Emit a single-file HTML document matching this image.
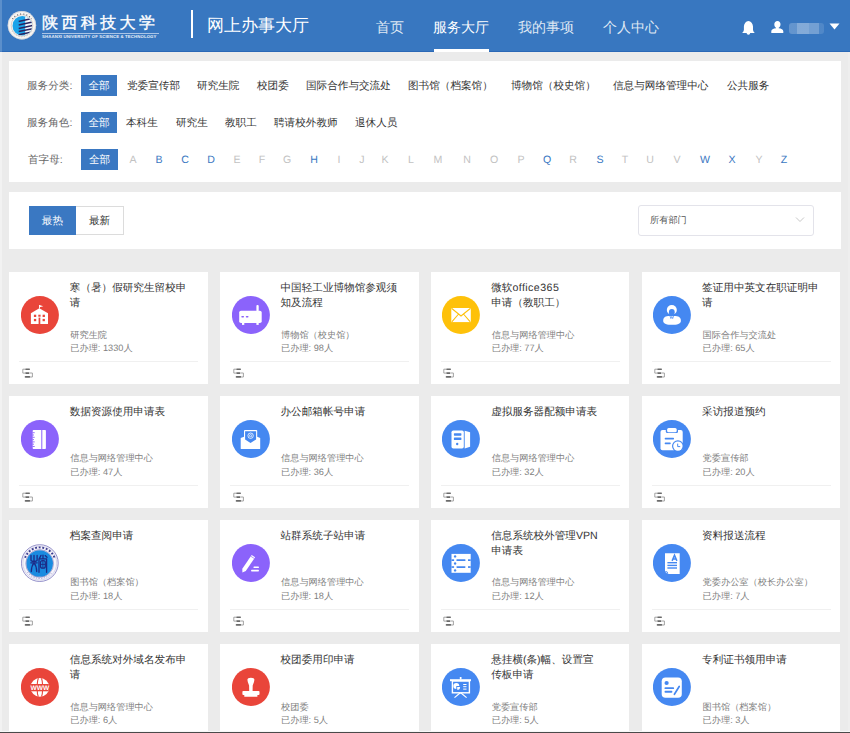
<!DOCTYPE html>
<html><head><meta charset="utf-8"><title>网上办事大厅</title>
<style>
*{margin:0;padding:0;box-sizing:border-box}
html,body{width:850px;height:733px;overflow:hidden;background:#ebebeb;font-family:"Liberation Sans",sans-serif;position:relative;text-rendering:geometricPrecision}
.abs{position:absolute}
#hd{position:absolute;left:0;top:0;width:850px;height:52px;background:#3877c0;border-bottom:1px solid #2a68b6}
.nav{position:absolute;top:17px;font-size:14px;line-height:20px;color:#dfe8f4;white-space:nowrap}
.nav.on{color:#fff}
.panel{position:absolute;background:#fff}
.lbl{position:absolute;font-size:10.6px;line-height:13px;color:#666;white-space:nowrap}
.btn{position:absolute;background:#3a78c2;color:#fff;font-size:10.6px;line-height:22px;text-align:center;width:36px;height:21px}
.fi{position:absolute;font-size:10.6px;line-height:13px;color:#333;white-space:nowrap}
.lt{position:absolute;width:20px;text-align:center;font-size:10.6px;line-height:14px;color:#c2c2c2}
.lt.on{color:#3a78c2}
.card{position:absolute;width:198.8px;height:112px;background:#fff}
.card .ic{position:absolute;left:11.5px;top:24.1px;width:38px;height:38px}
.card .ic svg{display:block}
.card .tt{position:absolute;left:60.5px;top:9.2px;width:132px;font-size:10.6px;line-height:14.6px;color:#333}
.card .dp{position:absolute;left:61px;top:56.6px;font-size:9.2px;line-height:13.6px;color:#808080;white-space:nowrap}
.card .ln{position:absolute;left:10px;top:89px;width:179px;height:1px;background:#f0f0f0}
.card .ft{position:absolute;left:12.5px;top:96px}
</style></head><body>
<div style="position:absolute;left:0;top:52px;width:2px;height:681px;background:#f2f2f2"></div>
<div style="position:absolute;left:848px;top:52px;width:2px;height:681px;background:#eeeeee"></div>
<div id="hd">
 <svg class="abs" style="left:7px;top:10px" width="30" height="31" viewBox="0 0 30 31">
  <defs><clipPath id="ec"><circle cx="15.35" cy="15.7" r="9.8"/></clipPath></defs>
  <circle cx="14.9" cy="15.3" r="14.2" fill="#f7f5f2"/>
  <circle cx="14.9" cy="15.3" r="13.9" fill="none" stroke="#b8bcc8" stroke-width=".5"/>
  <circle cx="15" cy="15.5" r="10.8" fill="none" stroke="#c9b8b4" stroke-width=".6"/>
  <path d="M5.5 9 A11.5 11.5 0 0 1 24.5 9" stroke="#4a4a55" stroke-width="1.1" fill="none" stroke-dasharray=".9 2.2"/>
  <path d="M5 21 A11.5 11.5 0 0 0 25 21" stroke="#c0c0c8" stroke-width="1" fill="none" stroke-dasharray="1 1.8"/>
  <circle cx="15.35" cy="15.7" r="9.8" fill="#1ba3e9"/>
  <g clip-path="url(#ec)">
   <rect x="18.2" y="6" width="10" height="20" fill="#f4f8fc"/>
   <path d="M11.7 11.4 L25 8.6 M11.7 14.9 L25.5 12.1 M11.7 18.4 L25.5 15.6 M11.7 21.6 L25.5 18.8 M11.7 24.7 L25 21.9" stroke="#2b2560" stroke-width="1.5" fill="none"/>
  </g>
 </svg>
 <div class="abs" style="left:42px;top:13px;font-family:'Liberation Serif',serif;font-size:16px;line-height:22px;letter-spacing:3.4px;color:#fff;font-weight:normal;font-style:normal;-webkit-text-stroke:.35px #fff;white-space:nowrap">陕西科技大学</div>
 <div class="abs" style="left:42px;top:33px;width:117px;height:1px;background:#a9c4e6"></div>
 <div class="abs" style="left:42px;top:35px;font-size:4.3px;line-height:4px;color:#e6eef8;font-weight:bold;white-space:nowrap;letter-spacing:.12px">SHAANXI UNIVERSITY OF SCIENCE &amp; TECHNOLOGY</div>
 <div class="abs" style="left:191px;top:10px;width:2px;height:28px;background:#fff"></div>
 <div class="abs" style="left:0;top:0;width:1.5px;height:52px;background:rgba(255,255,255,.18)"></div>
 <div class="abs" style="left:207px;top:13.5px;font-size:17px;line-height:24px;color:#fff;white-space:nowrap">网上办事大厅</div>
 <div class="nav" style="left:376px">首页</div>
 <div class="nav on" style="left:433px">服务大厅</div>
 <div class="abs" style="left:434px;top:49px;width:55px;height:3px;background:#fff"></div>
 <div class="nav" style="left:518px">我的事项</div>
 <div class="nav" style="left:603px">个人中心</div>
 <svg class="abs" style="left:742px;top:20px" width="14" height="15" viewBox="0 0 14 15"><path d="M6.4 .9 C8.9 1.2 10.9 3.2 11 6.6 L11 10 Q11.4 11.8 12.8 13 L0.1 13 Q1.5 11.8 1.9 10 L1.9 6.6 C2 3.2 3.9 1.2 6.4 .9Z" fill="#fff"/><circle cx="6.4" cy="13" r="1.8" fill="#fff"/></svg>
 <svg class="abs" style="left:771px;top:21px" width="13" height="13" viewBox="0 0 13 13"><path d="M6.5 0 C8.3 0 9.5 1.3 9.5 3.3 C9.5 5 8.6 6.2 7.7 6.8 L7.7 7.3 C10.2 7.6 12.3 8.5 12.3 10.3 L12.3 12 L.3 12 L.3 10.3 C.3 8.5 2.4 7.6 5 7.3 L5 6.8 C4.1 6.2 3.3 5 3.3 3.3 C3.3 1.3 4.6 0 6.5 0Z" fill="#fff"/></svg>
 <div class="abs" style="left:789px;top:23px;width:35px;height:11px;border-radius:3px;background:linear-gradient(90deg,rgba(255,255,255,.22) 0,rgba(255,255,255,.22) 8px,rgba(255,255,255,.38) 8px,rgba(255,255,255,.38) 20px,rgba(255,255,255,.3) 20px,rgba(255,255,255,.3) 30px,rgba(255,255,255,.12) 30px)"></div>
 <svg class="abs" style="left:829px;top:23px" width="11" height="7" viewBox="0 0 11 7"><path d="M.5 .5 L10.5 .5 L5.5 6.5Z" fill="#fff"/></svg>
</div>

<div class="panel" style="left:8.5px;top:60.6px;width:832.6px;height:121.8px"></div>
<div class="lbl" style="left:27px;top:80px">服务分类:</div>
<div class="btn" style="left:81px;top:74.5px">全部</div>
<div class="lbl" style="left:27px;top:117px">服务角色:</div>
<div class="btn" style="left:81px;top:111.5px">全部</div>
<div class="lbl" style="left:28px;top:154px">首字母:</div>
<div class="btn" style="left:81px;top:148.5px;width:37px">全部</div>
<div class="fi" style="left:127px;top:80px">党委宣传部</div><div class="fi" style="left:197px;top:80px">研究生院</div><div class="fi" style="left:257px;top:80px">校团委</div><div class="fi" style="left:306px;top:80px">国际合作与交流处</div><div class="fi" style="left:408px;top:80px">图书馆（档案馆）</div><div class="fi" style="left:511px;top:80px">博物馆（校史馆）</div><div class="fi" style="left:613px;top:80px">信息与网络管理中心</div><div class="fi" style="left:727px;top:80px">公共服务</div><div class="fi" style="left:126px;top:117px">本科生</div><div class="fi" style="left:176px;top:117px">研究生</div><div class="fi" style="left:225px;top:117px">教职工</div><div class="fi" style="left:274px;top:117px">聘请校外教师</div><div class="fi" style="left:355px;top:117px">退休人员</div><div class="lt" style="left:123px;top:153px">A</div><div class="lt on" style="left:149px;top:153px">B</div><div class="lt on" style="left:175px;top:153px">C</div><div class="lt on" style="left:201px;top:153px">D</div><div class="lt" style="left:227px;top:153px">E</div><div class="lt" style="left:252px;top:153px">F</div><div class="lt" style="left:277px;top:153px">G</div><div class="lt on" style="left:304px;top:153px">H</div><div class="lt" style="left:329px;top:153px">I</div><div class="lt" style="left:352px;top:153px">J</div><div class="lt" style="left:375px;top:153px">K</div><div class="lt" style="left:401px;top:153px">L</div><div class="lt" style="left:428px;top:153px">M</div><div class="lt" style="left:457px;top:153px">N</div><div class="lt" style="left:484px;top:153px">O</div><div class="lt" style="left:511px;top:153px">P</div><div class="lt on" style="left:537px;top:153px">Q</div><div class="lt" style="left:563px;top:153px">R</div><div class="lt on" style="left:590px;top:153px">S</div><div class="lt" style="left:615px;top:153px">T</div><div class="lt" style="left:640px;top:153px">U</div><div class="lt" style="left:667px;top:153px">V</div><div class="lt on" style="left:695px;top:153px">W</div><div class="lt on" style="left:722px;top:153px">X</div><div class="lt" style="left:749px;top:153px">Y</div><div class="lt on" style="left:774px;top:153px">Z</div>

<div class="panel" style="left:8.5px;top:191.6px;width:832.6px;height:57.1px"></div>
<div class="abs" style="left:28.8px;top:206px;width:47.2px;height:28.6px;background:#3a78c2;color:#fff;font-size:10.6px;line-height:30px;text-align:center">最热</div>
<div class="abs" style="left:76px;top:206px;width:48px;height:28.6px;border:1px solid #dcdcdc;border-left:none;color:#333;font-size:10.6px;line-height:28px;text-align:center">最新</div>
<div class="abs" style="left:638px;top:205px;width:176px;height:31px;border:1px solid #e3e3ea;border-radius:3px"></div>
<div class="abs" style="left:650px;top:214px;font-size:9.2px;line-height:13px;color:#555">所有部门</div>
<svg class="abs" style="left:795px;top:216px" width="10" height="7" viewBox="0 0 10 7"><path d="M1 1.5 L5 5.5 L9 1.5" stroke="#c8c8c8" stroke-width="1" fill="none"/></svg>

<div class="card" style="left:9.3px;top:272px">
<div class="ic"><svg width="38" height="38" viewBox="0 0 38 38"><circle cx="18.9" cy="19" r="19" fill="#e9453a"/><g transform="translate(0 0)"><path d="M9.9 17.3 L18.3 12.2 L27 17.3 L27 28 L9.9 28 Z" fill="#fff"/>
<rect x="18" y="9" width="0.9" height="3.5" fill="#fff"/><path d="M18.5 9 L22.3 10.2 L18.5 11.3Z" fill="#fff"/>
<rect x="12.9" y="18.7" width="2.3" height="2.3" fill="#e9453a"/><rect x="21.6" y="18.7" width="2.3" height="2.3" fill="#e9453a"/>
<rect x="12.9" y="22.9" width="2.3" height="2.3" fill="#e9453a"/><rect x="21.6" y="22.9" width="2.3" height="2.3" fill="#e9453a"/>
<rect x="17.3" y="18.7" width="2.3" height="2.0" fill="#e9453a"/><rect x="17.6" y="21.6" width="1.7" height="6.4" fill="#e9453a"/></g></svg></div>
<div class="tt">寒（暑）假研究生留校申<br>请</div>
<div class="dp">研究生院<br>已办理: 1330人</div>
<div class="ln"></div>
<svg class="ft" width="12" height="11" viewBox="0 0 12 11"><path d="M3.3 1.2 H.8 V5.1 H3.5 M8 5 H10.4 V9 H8.3" stroke="#9a9a9a" stroke-width=".9" fill="none"/><rect x="3.2" y=".5" width="4.8" height="1.5" rx=".7" fill="#6a6a6a"/><rect x="3.2" y="4.2" width="4.4" height="1.7" rx=".8" fill="#6a6a6a"/><rect x="2.7" y="8.1" width="5.6" height="1.7" rx=".8" fill="#6a6a6a"/></svg>
</div><div class="card" style="left:220px;top:272px">
<div class="ic"><svg width="38" height="38" viewBox="0 0 38 38"><circle cx="18.9" cy="19" r="19" fill="#8b63fb"/><g transform="translate(0 0)"><rect x="7.2" y="14.7" width="22.5" height="12.4" rx="1.8" fill="#fff"/>
<rect x="24.4" y="9" width="2.3" height="6.5" rx="1" fill="#fff"/>
<rect x="10" y="26.5" width="2.3" height="2.4" fill="#fff"/><rect x="24.4" y="26.5" width="2.3" height="2.4" fill="#fff"/>
<rect x="9.3" y="19.9" width="2.7" height="1.5" rx=".7" fill="#8b63fb"/><rect x="13.8" y="19.9" width="2.7" height="1.5" rx=".7" fill="#8b63fb"/></g></svg></div>
<div class="tt">中国轻工业博物馆参观须<br>知及流程</div>
<div class="dp">博物馆（校史馆）<br>已办理: 98人</div>
<div class="ln"></div>
<svg class="ft" width="12" height="11" viewBox="0 0 12 11"><path d="M3.3 1.2 H.8 V5.1 H3.5 M8 5 H10.4 V9 H8.3" stroke="#9a9a9a" stroke-width=".9" fill="none"/><rect x="3.2" y=".5" width="4.8" height="1.5" rx=".7" fill="#6a6a6a"/><rect x="3.2" y="4.2" width="4.4" height="1.7" rx=".8" fill="#6a6a6a"/><rect x="2.7" y="8.1" width="5.6" height="1.7" rx=".8" fill="#6a6a6a"/></svg>
</div><div class="card" style="left:430.7px;top:272px">
<div class="ic"><svg width="38" height="38" viewBox="0 0 38 38"><circle cx="18.9" cy="19" r="19" fill="#fec10a"/><g transform="translate(0 0)"><rect x="9.3" y="12" width="19.5" height="14.1" fill="#fff"/>
<path d="M9.5 12.2 L19 20 L28.6 12.2 M9.8 25.9 L16.2 18.5 M28.3 25.9 L21.9 18.5" stroke="#fec10a" stroke-width="1.1" fill="none"/></g></svg></div>
<div class="tt">微软<span style="letter-spacing:.45px">office365</span><br>申请（教职工）</div>
<div class="dp">信息与网络管理中心<br>已办理: 77人</div>
<div class="ln"></div>
<svg class="ft" width="12" height="11" viewBox="0 0 12 11"><path d="M3.3 1.2 H.8 V5.1 H3.5 M8 5 H10.4 V9 H8.3" stroke="#9a9a9a" stroke-width=".9" fill="none"/><rect x="3.2" y=".5" width="4.8" height="1.5" rx=".7" fill="#6a6a6a"/><rect x="3.2" y="4.2" width="4.4" height="1.7" rx=".8" fill="#6a6a6a"/><rect x="2.7" y="8.1" width="5.6" height="1.7" rx=".8" fill="#6a6a6a"/></svg>
</div><div class="card" style="left:641.6px;top:272px">
<div class="ic"><svg width="38" height="38" viewBox="0 0 38 38"><circle cx="18.9" cy="19" r="19" fill="#4588f1"/><g transform="translate(0 0)"><ellipse cx="18.8" cy="13.9" rx="5" ry="4.9" fill="#fff"/>
<ellipse cx="18.8" cy="16.3" rx="2.9" ry="3.2" fill="#4588f1"/>
<rect x="14.5" y="18.6" width="8.6" height="1.6" fill="#4588f1"/>
<path d="M10.2 25 C10.2 21.2 12.5 20.1 16.6 20.1 L21.2 20.1 C25.4 20.1 27.9 21.2 27.9 25 C27.9 28 23.8 28.8 19 28.8 C14.3 28.8 10.2 28 10.2 25Z" fill="#fff"/>
<path d="M17 20 L17.9 22.6 L18.8 20.4 L19.7 22.6 L20.6 20" stroke="#4588f1" stroke-width=".7" fill="none"/></g></svg></div>
<div class="tt">签证用中英文在职证明申<br>请</div>
<div class="dp">国际合作与交流处<br>已办理: 65人</div>
<div class="ln"></div>
<svg class="ft" width="12" height="11" viewBox="0 0 12 11"><path d="M3.3 1.2 H.8 V5.1 H3.5 M8 5 H10.4 V9 H8.3" stroke="#9a9a9a" stroke-width=".9" fill="none"/><rect x="3.2" y=".5" width="4.8" height="1.5" rx=".7" fill="#6a6a6a"/><rect x="3.2" y="4.2" width="4.4" height="1.7" rx=".8" fill="#6a6a6a"/><rect x="2.7" y="8.1" width="5.6" height="1.7" rx=".8" fill="#6a6a6a"/></svg>
</div><div class="card" style="left:9.3px;top:395.6px">
<div class="ic"><svg width="38" height="38" viewBox="0 0 38 38"><circle cx="18.9" cy="19" r="19" fill="#8b63fb"/><g transform="translate(0 0.3)"><rect x="11.7" y="9.6" width="13.2" height="19.2" rx=".8" fill="#fff"/>
<rect x="20.3" y="9.6" width="1" height="19.2" fill="#8b63fb"/>
<path d="M11.5 12.4 h2.2 M11.5 14.7 h1.5 M11.5 17 h2.2 M11.5 19.3 h1.5 M11.5 21.6 h2.2 M11.5 23.9 h1.5 M11.5 26.2 h2.2" stroke="#8b63fb" stroke-width=".9"/></g></svg></div>
<div class="tt">数据资源使用申请表</div>
<div class="dp">信息与网络管理中心<br>已办理: 47人</div>
<div class="ln"></div>
<svg class="ft" width="12" height="11" viewBox="0 0 12 11"><path d="M3.3 1.2 H.8 V5.1 H3.5 M8 5 H10.4 V9 H8.3" stroke="#9a9a9a" stroke-width=".9" fill="none"/><rect x="3.2" y=".5" width="4.8" height="1.5" rx=".7" fill="#6a6a6a"/><rect x="3.2" y="4.2" width="4.4" height="1.7" rx=".8" fill="#6a6a6a"/><rect x="2.7" y="8.1" width="5.6" height="1.7" rx=".8" fill="#6a6a6a"/></svg>
</div><div class="card" style="left:220px;top:395.6px">
<div class="ic"><svg width="38" height="38" viewBox="0 0 38 38"><circle cx="18.9" cy="19" r="19" fill="#4588f1"/><g transform="translate(0 0.3)"><path d="M12 10.5 Q12 9.6 13 9.6 L24.3 9.6 Q25.2 9.6 25.2 10.5 L25.2 16.4 L28.2 17.8 L28.2 28.2 Q28.2 28.8 27.6 28.8 L9.3 28.8 Q8.7 28.8 8.7 28.2 L8.7 17.8 L12 16.4Z" fill="#fff"/>
<path d="M13.1 10.9 L24.1 10.9 L24.1 19.2 L18.5 22.6 L13.1 19.2Z" fill="#4588f1"/>
<circle cx="18.6" cy="15.4" r="2.7" stroke="#fff" stroke-width=".8" fill="none"/><circle cx="18.6" cy="15.4" r="1.1" stroke="#fff" stroke-width=".7" fill="none"/></g></svg></div>
<div class="tt">办公邮箱帐号申请</div>
<div class="dp">信息与网络管理中心<br>已办理: 36人</div>
<div class="ln"></div>
<svg class="ft" width="12" height="11" viewBox="0 0 12 11"><path d="M3.3 1.2 H.8 V5.1 H3.5 M8 5 H10.4 V9 H8.3" stroke="#9a9a9a" stroke-width=".9" fill="none"/><rect x="3.2" y=".5" width="4.8" height="1.5" rx=".7" fill="#6a6a6a"/><rect x="3.2" y="4.2" width="4.4" height="1.7" rx=".8" fill="#6a6a6a"/><rect x="2.7" y="8.1" width="5.6" height="1.7" rx=".8" fill="#6a6a6a"/></svg>
</div><div class="card" style="left:430.7px;top:395.6px">
<div class="ic"><svg width="38" height="38" viewBox="0 0 38 38"><circle cx="18.9" cy="19" r="19" fill="#4588f1"/><g transform="translate(0.8 0.3)"><rect x="8.7" y="10.2" width="12.3" height="18" rx="1.8" fill="#fff"/>
<rect x="11.1" y="12.9" width="7.5" height="2.5" rx=".6" fill="#4588f1"/><rect x="11.1" y="17.1" width="7.5" height="2.6" rx=".6" fill="#4588f1"/>
<circle cx="14.4" cy="23.7" r="1.2" fill="#4588f1"/>
<path d="M21.9 10.5 L27.3 12 L27.3 26.4 L21.9 28.2Z" fill="#fff"/></g></svg></div>
<div class="tt">虚拟服务器配额申请表</div>
<div class="dp">信息与网络管理中心<br>已办理: 32人</div>
<div class="ln"></div>
<svg class="ft" width="12" height="11" viewBox="0 0 12 11"><path d="M3.3 1.2 H.8 V5.1 H3.5 M8 5 H10.4 V9 H8.3" stroke="#9a9a9a" stroke-width=".9" fill="none"/><rect x="3.2" y=".5" width="4.8" height="1.5" rx=".7" fill="#6a6a6a"/><rect x="3.2" y="4.2" width="4.4" height="1.7" rx=".8" fill="#6a6a6a"/><rect x="2.7" y="8.1" width="5.6" height="1.7" rx=".8" fill="#6a6a6a"/></svg>
</div><div class="card" style="left:641.6px;top:395.6px">
<div class="ic"><svg width="38" height="38" viewBox="0 0 38 38"><circle cx="18.9" cy="19" r="19" fill="#4588f1"/><g transform="translate(0 0.3)"><rect x="7.5" y="9.6" width="22.2" height="20.4" rx="2" fill="#fff"/>
<rect x="12.8" y="6.8" width="12.2" height="5.8" rx="1.5" fill="#4588f1"/>
<rect x="14.1" y="7.8" width="9.6" height="4.2" rx="1.5" fill="#fff"/>
<rect x="11.7" y="17.5" width="9.3" height="1.6" rx=".6" fill="#4588f1"/><rect x="11.7" y="22.3" width="6" height="1.6" rx=".6" fill="#4588f1"/>
<circle cx="24.9" cy="25.8" r="5.9" fill="#4588f1"/><circle cx="24.9" cy="25.8" r="4.7" fill="#fff"/>
<path d="M24.7 23.3 L24.7 26.3 L27.2 26.3" stroke="#4588f1" stroke-width="1" fill="none"/></g></svg></div>
<div class="tt">采访报道预约</div>
<div class="dp">党委宣传部<br>已办理: 20人</div>
<div class="ln"></div>
<svg class="ft" width="12" height="11" viewBox="0 0 12 11"><path d="M3.3 1.2 H.8 V5.1 H3.5 M8 5 H10.4 V9 H8.3" stroke="#9a9a9a" stroke-width=".9" fill="none"/><rect x="3.2" y=".5" width="4.8" height="1.5" rx=".7" fill="#6a6a6a"/><rect x="3.2" y="4.2" width="4.4" height="1.7" rx=".8" fill="#6a6a6a"/><rect x="2.7" y="8.1" width="5.6" height="1.7" rx=".8" fill="#6a6a6a"/></svg>
</div><div class="card" style="left:9.3px;top:519.8px">
<div class="ic"><svg width="38" height="38" viewBox="0 0 38 38"><circle cx="18.8" cy="19.1" r="18.9" fill="#f5f4fa"/>
<circle cx="18.8" cy="19.1" r="18.4" fill="none" stroke="#8d8ac6" stroke-width=".9"/>
<circle cx="18.8" cy="19.1" r="16.9" fill="none" stroke="#b9b6dc" stroke-width=".5"/>
<path d="M4.1 13.8 A15.6 15.6 0 0 1 33.5 13.8" stroke="#3c3d8f" stroke-width="1.9" fill="none" stroke-dasharray="1.9 1.7"/>
<path d="M6.4 28.2 A15.4 15.4 0 0 0 31.2 28.2" stroke="#a09ed0" stroke-width="1" fill="none" stroke-dasharray="1.2 1.4"/>
<circle cx="18.65" cy="19.5" r="13.3" fill="#1a8be0"/>
<circle cx="18.65" cy="19.5" r="13.9" fill="none" stroke="#5a58a8" stroke-width=".5"/>
<path d="M10 11.5 L10 16.2 Q10 17.3 13 17.3 Q16.1 17.3 16.1 16.2 L16.1 11.5 M13 11.5 L13 17.3 M9.8 18.8 L16.2 18.8 M13 18.8 Q10.3 22 10.3 27.6 M13 18.8 Q15.7 22 15.7 27.6" stroke="#1c2a86" stroke-width="1.3" fill="none" stroke-linecap="round"/>
<path d="M18.3 14.6 L20 11.4 M22 11.2 L22 14 M24.2 11.6 L26 13.2 M18 15 L18 28.3 M25.6 14.8 L25.6 28.3 M18 14.8 L25.6 14.8" stroke="#1c2a86" stroke-width="1.3" fill="none" stroke-linecap="round"/>
<rect x="19.5" y="16.6" width="4.8" height="7.6" rx="2" fill="none" stroke="#1c2a86" stroke-width="1.2"/>
<path d="M19.5 20.4 h4.8 M21.9 16.6 v7.6" stroke="#1c2a86" stroke-width=".9"/>
</svg></div>
<div class="tt">档案查阅申请</div>
<div class="dp">图书馆（档案馆）<br>已办理: 18人</div>
<div class="ln"></div>
<svg class="ft" width="12" height="11" viewBox="0 0 12 11"><path d="M3.3 1.2 H.8 V5.1 H3.5 M8 5 H10.4 V9 H8.3" stroke="#9a9a9a" stroke-width=".9" fill="none"/><rect x="3.2" y=".5" width="4.8" height="1.5" rx=".7" fill="#6a6a6a"/><rect x="3.2" y="4.2" width="4.4" height="1.7" rx=".8" fill="#6a6a6a"/><rect x="2.7" y="8.1" width="5.6" height="1.7" rx=".8" fill="#6a6a6a"/></svg>
</div><div class="card" style="left:220px;top:519.8px">
<div class="ic"><svg width="38" height="38" viewBox="0 0 38 38"><circle cx="18.9" cy="19" r="19" fill="#8b63fb"/><g transform="translate(0 0)"><path d="M10.4 28.4 L10.3 24.8 L19.7 11 L23.1 13.2 L13.8 27 Z" fill="#fff"/>
<path d="M18.9 12.3 L22.3 14.5" stroke="#8b63fb" stroke-width=".7"/>
<rect x="21.5" y="22.4" width="5.4" height="1.7" rx=".6" fill="#fff"/><rect x="19.1" y="25.7" width="7.8" height="1.7" rx=".6" fill="#fff"/></g></svg></div>
<div class="tt">站群系统子站申请</div>
<div class="dp">信息与网络管理中心<br>已办理: 18人</div>
<div class="ln"></div>
<svg class="ft" width="12" height="11" viewBox="0 0 12 11"><path d="M3.3 1.2 H.8 V5.1 H3.5 M8 5 H10.4 V9 H8.3" stroke="#9a9a9a" stroke-width=".9" fill="none"/><rect x="3.2" y=".5" width="4.8" height="1.5" rx=".7" fill="#6a6a6a"/><rect x="3.2" y="4.2" width="4.4" height="1.7" rx=".8" fill="#6a6a6a"/><rect x="2.7" y="8.1" width="5.6" height="1.7" rx=".8" fill="#6a6a6a"/></svg>
</div><div class="card" style="left:430.7px;top:519.8px">
<div class="ic"><svg width="38" height="38" viewBox="0 0 38 38"><circle cx="18.9" cy="19" r="19" fill="#4588f1"/><g transform="translate(0.8 0)"><rect x="8.7" y="9.9" width="19.2" height="18.9" fill="#fff"/>
<rect x="8.7" y="15.3" width="2.6" height="1.7" fill="#4588f1"/><rect x="13.5" y="15.3" width="9.3" height="1.7" rx=".8" fill="#4588f1"/><rect x="25.2" y="15.3" width="2.7" height="1.7" fill="#4588f1"/>
<rect x="8.7" y="22.2" width="2.6" height="1.7" fill="#4588f1"/><rect x="13.5" y="22.2" width="9.3" height="1.7" rx=".8" fill="#4588f1"/><rect x="25.2" y="22.2" width="2.7" height="1.7" fill="#4588f1"/>
<circle cx="12.3" cy="12.4" r="1.2" fill="#4588f1"/><circle cx="12.3" cy="19.5" r="1.2" fill="#4588f1"/><circle cx="12.3" cy="26.4" r="1.2" fill="#4588f1"/></g></svg></div>
<div class="tt">信息系统校外管理VPN<br>申请表</div>
<div class="dp">信息与网络管理中心<br>已办理: 12人</div>
<div class="ln"></div>
<svg class="ft" width="12" height="11" viewBox="0 0 12 11"><path d="M3.3 1.2 H.8 V5.1 H3.5 M8 5 H10.4 V9 H8.3" stroke="#9a9a9a" stroke-width=".9" fill="none"/><rect x="3.2" y=".5" width="4.8" height="1.5" rx=".7" fill="#6a6a6a"/><rect x="3.2" y="4.2" width="4.4" height="1.7" rx=".8" fill="#6a6a6a"/><rect x="2.7" y="8.1" width="5.6" height="1.7" rx=".8" fill="#6a6a6a"/></svg>
</div><div class="card" style="left:641.6px;top:519.8px">
<div class="ic"><svg width="38" height="38" viewBox="0 0 38 38"><circle cx="18.9" cy="19" r="19" fill="#4588f1"/><g transform="translate(0 0)"><path d="M12 9.3 L26.7 9.3 L26.7 30 L14.6 30 L12 27.4Z" fill="#fff"/>
<path d="M12.3 27.4 Q15 27.2 14.8 30" stroke="#4588f1" stroke-width=".9" fill="none"/>
<path d="M19.1 16.9 L21.5 11.2 L23.9 16.9 M19.9 15.1 h3.2" stroke="#4588f1" stroke-width="1.5" fill="none"/>
<rect x="14.4" y="18" width="9.6" height="1.4" fill="#4588f1"/><rect x="14.4" y="20.7" width="9.6" height="1.4" fill="#4588f1"/><rect x="14.4" y="23.3" width="9.6" height="1.4" fill="#4588f1"/></g></svg></div>
<div class="tt">资料报送流程</div>
<div class="dp">党委办公室（校长办公室）<br>已办理: 7人</div>
<div class="ln"></div>
<svg class="ft" width="12" height="11" viewBox="0 0 12 11"><path d="M3.3 1.2 H.8 V5.1 H3.5 M8 5 H10.4 V9 H8.3" stroke="#9a9a9a" stroke-width=".9" fill="none"/><rect x="3.2" y=".5" width="4.8" height="1.5" rx=".7" fill="#6a6a6a"/><rect x="3.2" y="4.2" width="4.4" height="1.7" rx=".8" fill="#6a6a6a"/><rect x="2.7" y="8.1" width="5.6" height="1.7" rx=".8" fill="#6a6a6a"/></svg>
</div><div class="card" style="left:9.3px;top:644px">
<div class="ic"><svg width="38" height="38" viewBox="0 0 38 38"><circle cx="18.9" cy="19" r="19" fill="#e9453a"/><g transform="translate(0 0)"><defs><clipPath id="gl"><circle cx="18.9" cy="19.4" r="9.4"/></clipPath></defs>
<g clip-path="url(#gl)"><rect x="8" y="9" width="22" height="8" fill="#fff"/><rect x="8" y="22" width="22" height="8" fill="#fff"/>
<path d="M17.6 9.5 Q16.2 13 16.2 17 M20.2 9.5 Q21.6 13 21.6 17 M17.6 29.5 Q16.2 26 16.2 22 M20.2 29.5 Q21.6 26 21.6 22" stroke="#e9453a" stroke-width="1.1" fill="none"/>
<rect x="8" y="16" width="22" height="1.3" fill="#e9453a"/><rect x="8" y="22" width="22" height="1.3" fill="#e9453a"/></g>
<text x="18.9" y="22" text-anchor="middle" font-family="Liberation Sans" font-weight="bold" font-size="6.6" fill="#fff" style="text-rendering:geometricPrecision">WWW</text></g></svg></div>
<div class="tt">信息系统对外域名发布申<br>请</div>
<div class="dp">信息与网络管理中心<br>已办理: 6人</div>
<div class="ln"></div>
<svg class="ft" width="12" height="11" viewBox="0 0 12 11"><path d="M3.3 1.2 H.8 V5.1 H3.5 M8 5 H10.4 V9 H8.3" stroke="#9a9a9a" stroke-width=".9" fill="none"/><rect x="3.2" y=".5" width="4.8" height="1.5" rx=".7" fill="#6a6a6a"/><rect x="3.2" y="4.2" width="4.4" height="1.7" rx=".8" fill="#6a6a6a"/><rect x="2.7" y="8.1" width="5.6" height="1.7" rx=".8" fill="#6a6a6a"/></svg>
</div><div class="card" style="left:220px;top:644px">
<div class="ic"><svg width="38" height="38" viewBox="0 0 38 38"><circle cx="18.9" cy="19" r="19" fill="#e9453a"/><g transform="translate(0 0)"><path d="M15.4 11.8 Q15.4 9.8 18.9 9.8 Q22.4 9.8 22.4 11.8 Q22.4 13.6 20.7 17.6 L20.6 22.9 L26.6 22.9 Q27.5 22.9 27.5 23.8 L27.5 26 Q27.5 26.9 26.6 26.9 L25.4 26.9 L25.4 28.7 L12.3 28.7 L12.3 26.9 L11.3 26.9 Q10.4 26.9 10.4 26 L10.4 23.8 Q10.4 22.9 11.3 22.9 L17.2 22.9 L17.1 17.6 Q15.4 13.6 15.4 11.8Z" fill="#fff"/></g></svg></div>
<div class="tt">校团委用印申请</div>
<div class="dp">校团委<br>已办理: 5人</div>
<div class="ln"></div>
<svg class="ft" width="12" height="11" viewBox="0 0 12 11"><path d="M3.3 1.2 H.8 V5.1 H3.5 M8 5 H10.4 V9 H8.3" stroke="#9a9a9a" stroke-width=".9" fill="none"/><rect x="3.2" y=".5" width="4.8" height="1.5" rx=".7" fill="#6a6a6a"/><rect x="3.2" y="4.2" width="4.4" height="1.7" rx=".8" fill="#6a6a6a"/><rect x="2.7" y="8.1" width="5.6" height="1.7" rx=".8" fill="#6a6a6a"/></svg>
</div><div class="card" style="left:430.7px;top:644px">
<div class="ic"><svg width="38" height="38" viewBox="0 0 38 38"><circle cx="18.9" cy="19" r="19" fill="#4588f1"/><g transform="translate(0.8 0)"><rect x="7.2" y="11.2" width="21" height="2" fill="#fff"/><rect x="17" y="9" width="1.7" height="2.5" fill="#fff"/>
<rect x="9.6" y="13" width="17" height="11.8" fill="none" stroke="#fff" stroke-width="1.4"/>
<path d="M17.5 24.8 L11.7 29.6 M17.9 24.8 L23.8 29.6" stroke="#fff" stroke-width="1.2"/>
<path d="M13.5 18 L16.5 18 A3 3 0 1 0 13.5 21 Z" fill="#fff"/><path d="M14.4 18.9 L17.3 18.9 A2.9 2.9 0 0 1 14.4 21.8 Z" fill="#fff"/>
<rect x="20.4" y="16" width="3.3" height="1" fill="#fff"/><rect x="20.4" y="18.2" width="3.3" height="1" fill="#fff"/><rect x="20.4" y="20.6" width="3.3" height="1" fill="#fff"/></g></svg></div>
<div class="tt">悬挂横(条)幅、设置宣<br>传板申请</div>
<div class="dp">党委宣传部<br>已办理: 5人</div>
<div class="ln"></div>
<svg class="ft" width="12" height="11" viewBox="0 0 12 11"><path d="M3.3 1.2 H.8 V5.1 H3.5 M8 5 H10.4 V9 H8.3" stroke="#9a9a9a" stroke-width=".9" fill="none"/><rect x="3.2" y=".5" width="4.8" height="1.5" rx=".7" fill="#6a6a6a"/><rect x="3.2" y="4.2" width="4.4" height="1.7" rx=".8" fill="#6a6a6a"/><rect x="2.7" y="8.1" width="5.6" height="1.7" rx=".8" fill="#6a6a6a"/></svg>
</div><div class="card" style="left:641.6px;top:644px">
<div class="ic"><svg width="38" height="38" viewBox="0 0 38 38"><circle cx="18.9" cy="19" r="19" fill="#4588f1"/><g transform="translate(0 0)"><rect x="8.7" y="9.4" width="20.1" height="20.3" rx="3.8" fill="#fff"/>
<circle cx="13.6" cy="15" r="2.1" fill="#4588f1"/>
<rect x="11.5" y="19.2" width="9.6" height="1.9" rx=".9" fill="#4588f1"/><rect x="11.5" y="22.8" width="7.9" height="1.9" rx=".9" fill="#4588f1"/>
<path d="M21.4 26.3 L26.2 18.5" stroke="#4588f1" stroke-width="1.7" stroke-linecap="round"/></g></svg></div>
<div class="tt">专利证书领用申请</div>
<div class="dp">图书馆（档案馆）<br>已办理: 3人</div>
<div class="ln"></div>
<svg class="ft" width="12" height="11" viewBox="0 0 12 11"><path d="M3.3 1.2 H.8 V5.1 H3.5 M8 5 H10.4 V9 H8.3" stroke="#9a9a9a" stroke-width=".9" fill="none"/><rect x="3.2" y=".5" width="4.8" height="1.5" rx=".7" fill="#6a6a6a"/><rect x="3.2" y="4.2" width="4.4" height="1.7" rx=".8" fill="#6a6a6a"/><rect x="2.7" y="8.1" width="5.6" height="1.7" rx=".8" fill="#6a6a6a"/></svg>
</div>
<div style="position:absolute;left:0;top:731px;width:850px;height:1px;background:#f7f7f7"></div>
<div style="position:absolute;left:0;top:732px;width:850px;height:1px;background:#4a4a4a"></div>
</body></html>
